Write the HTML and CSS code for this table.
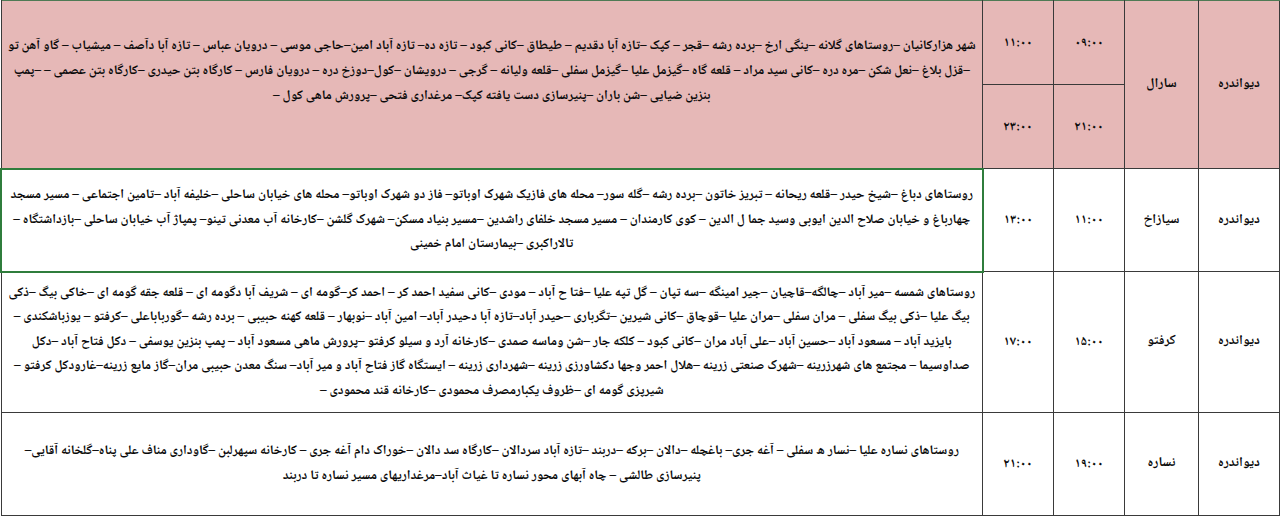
FILE: index.html
```html
<!DOCTYPE html>
<html lang="fa" dir="rtl">
<head>
<meta charset="utf-8">
<title>جدول خاموشی دیواندره</title>
<link rel="stylesheet" href="styles.css">
</head>
<body>
<table class="schedule">
  <colgroup>
    <col class="c-city">
    <col class="c-name">
    <col class="c-time">
    <col class="c-time2">
    <col class="c-list">
  </colgroup>
  <tbody>
    <tr class="row-pink row-top">
      <td class="city" rowspan="2">دیواندره</td>
      <td class="name" rowspan="2">سارال</td>
      <td class="time">۰۹:۰۰</td>
      <td class="time">۱۱:۰۰</td>
      <td class="list list-first" rowspan="2">
        <span class="ln">شهر هزارکانیان –روستاهای گلانه –ینگی ارخ –برده رشه –قجر – کپک –تازه آبا دقدیم – طیطاق –کانی کبود – تازه ده– تازه آباد امین–حاجی موسی – درویان عباس – تازه آبا دآصف – میشیاب – گاو آهن تو</span>
        <span class="ln">–قزل بلاغ –نعل شکن –مره دره –کانی سید مراد – قلعه گاه –گیزمل علیا –گیزمل سفلی –قلعه ولیانه – گرجی – درویشان –کول–دوزخ دره – درویان فارس – کارگاه بتن حیدری –کارگاه بتن عصمی – –پمپ</span>
        <span class="ln">بنزین ضیایی –شن باران –پنیرسازی دست یافته کپک– مرغداری فتحی –پرورش ماهی کول –</span>
      </td>
    </tr>
    <tr class="row-pink row-sub">
      <td class="time">۲۱:۰۰</td>
      <td class="time">۲۳:۰۰</td>
    </tr>
    <tr class="row-2">
      <td class="city">دیواندره</td>
      <td class="name">سیازاخ</td>
      <td class="time">۱۱:۰۰</td>
      <td class="time">۱۳:۰۰</td>
      <td class="list list-selected">
        <span class="ln">روستاهای دباغ –شیخ حیدر –قلعه ریحانه – تبریز خاتون –برده رشه –گله سور– محله های  فازیک شهرک اوباتو– فاز دو شهرک اوباتو– محله های خیابان ساحلی –خلیفه آباد –تامین اجتماعی – مسیر مسجد</span>
        <span class="ln">چهارباغ و خیابان  صلاح الدین ایوبی وسید جما ل الدین  – کوی کارمندان – مسیر مسجد خلفای راشدین –مسیر بنیاد مسکن– شهرک گلشن –کارخانه آب معدنی تینو– پمپاژ آب خیابان ساحلی –بازداشتگاه –</span>
        <span class="ln">تالاراکبری –بیمارستان امام خمینی</span>
      </td>
    </tr>
    <tr class="row-3">
      <td class="city">دیواندره</td>
      <td class="name">کرفتو</td>
      <td class="time">۱۵:۰۰</td>
      <td class="time">۱۷:۰۰</td>
      <td class="list">
        <span class="ln">روستاهای شمسه –میر آباد –چالگه–قاچیان –جیر امینگه –سه تپان – گل تپه علیا –فتا ح آباد – مودی –کانی سفید احمد کر – احمد کر–گومه ای – شریف آبا دگومه ای – قلعه جقه گومه ای –خاکی بیگ –ذکی</span>
        <span class="ln">بیگ علیا –ذکی بیگ سفلی – مران سفلی –مران علیا –قوچاق –کانی شیرین –تگرباری –حیدر آباد–تازه آبا دحیدر آباد– امین آباد –نوبهار – قلعه کهنه حبیبی – برده رشه –گورباباعلی –کرفتو – یوزباشکندی –</span>
        <span class="ln">بایزید آباد – مسعود آباد –حسین آباد –علی آباد مران –کانی کبود – کلکه جار –شن وماسه صمدی  –کارخانه آرد و سیلو کرفتو –پرورش ماهی مسعود آباد – پمپ بنزین یوسفی – دکل فتاح آباد –دکل</span>
        <span class="ln">صداوسیما – مجتمع های شهرزرینه –شهرک صنعتی زرینه –هلال احمر وجها دکشاورزی زرینه –شهرداری زرینه – ایستگاه گاز فتاح آباد و میر آباد– سنگ معدن حبیبی مران–گاز مایع زرینه–غارودکل کرفتو –</span>
        <span class="ln">شیرپزی گومه ای –ظروف یکبارمصرف محمودی –کارخانه قند محمودی –</span>
      </td>
    </tr>
    <tr class="row-4">
      <td class="city">دیواندره</td>
      <td class="name">نساره</td>
      <td class="time">۱۹:۰۰</td>
      <td class="time">۲۱:۰۰</td>
      <td class="list">
        <span class="ln">روستاهای نساره علیا –نسار ه سفلی – آغه جری– باغچله –دالان –برکه –دربند –تازه آباد سردالان –کارگاه سد دالان –خوراک دام آغه جری – کارخانه سپهرلبن –گاوداری مناف علی پناه–گلخانه آقایی–</span>
        <span class="ln">پنیرسازی طالشی – چاه آبهای محور نساره تا غیاث آباد–مرغداریهای مسیر نساره تا دربند</span>
      </td>
    </tr>
  </tbody>
</table>
</body>
</html>
```

FILE: styles.css
```css
html, body {
  margin: 0;
  padding: 0;
  background: #ffffff;
}

body {
  font-family: "Noto Naskh Arabic", "Noto Sans Arabic", "DejaVu Sans Condensed", "DejaVu Sans", sans-serif;
  font-weight: bold;
  color: #0a0a0a;
}

.schedule {
  width: 1280px;
  border-collapse: collapse;
  table-layout: fixed;
  direction: rtl;
}

.c-city { width: 81px; }
.c-name { width: 74px; }
.c-time { width: 71px; }
.c-time2 { width: 71px; }
.c-list { width: auto; }

.schedule td {
  border: 1px solid #3a3a3a;
  padding: 0;
  text-align: center;
  vertical-align: middle;
  font-size: 12px;
  white-space: nowrap;
  overflow: hidden;
}

.schedule .row-pink td {
  background: #e6b8b7;
}

.schedule .row-top td {
  border-top-color: #4f7a55;
}

.schedule .row-top td.time,
.schedule .row-sub td.time {
  height: 83px;
}

.schedule .row-2 td { height: 101px; }
.schedule .row-3 td { height: 139px; }
.schedule .row-4 td { height: 102px; }

.schedule td.city,
.schedule td.name {
  font-size: 13.5px;
}

.schedule td.time {
  font-size: 13px;
}

.schedule td.list {
  font-size: 13.2px;
  line-height: 24.6px;
}

.schedule td.list-first {
  padding-bottom: 26px;
}

.schedule td.list-selected {
  border: 2px solid #2f7d3c;
}

.ln {
  display: block;
}
```
